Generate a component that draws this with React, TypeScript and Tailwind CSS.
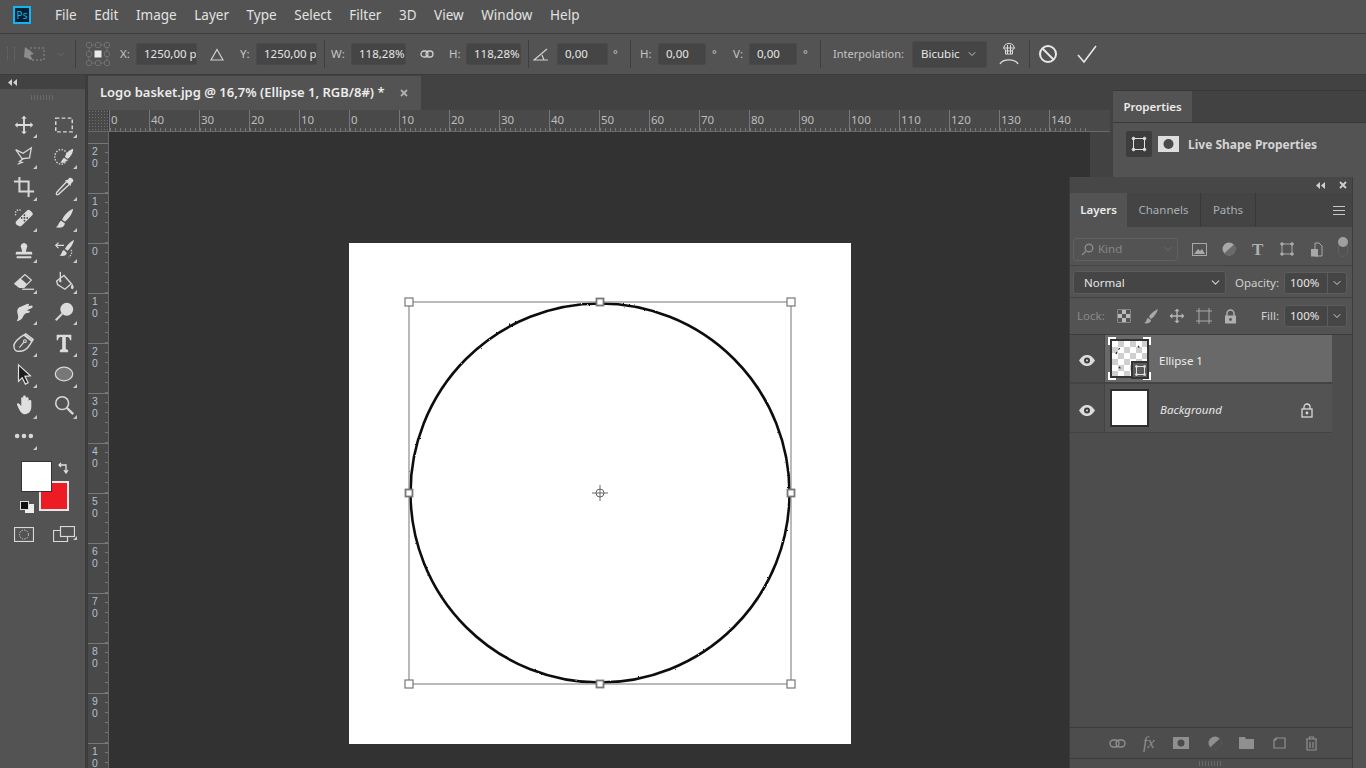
import type { ReactNode } from "react";
import { ChevronDown } from "lucide-react";

const FONT = "font-['Noto_Sans','Open_Sans',sans-serif]";

const MENU = ["File", "Edit", "Image", "Layer", "Type", "Select", "Filter", "3D", "View", "Window", "Help"];

const RULER_H = ["40", "30", "20", "10", "0", "10", "20", "30", "40", "50", "60", "70", "80", "90", "100", "110", "120", "130"];
const RULER_V = [["2", "0"], ["1", "0"], ["0"], ["1", "0"], ["2", "0"], ["3", "0"], ["4", "0"], ["5", "0"], ["6", "0"], ["7", "0"], ["8", "0"], ["9", "0"], ["1", "0"]];

function Ico({ size = 24, children }: { size?: number; children: ReactNode }) {
  return (
    <svg width={size} height={size} viewBox="0 0 24 24" fill="none" stroke="#d8d8d8" strokeWidth="1.5">
      {children}
    </svg>
  );
}

// toolbar icons, two per row, top to bottom
const TOOLS: ReactNode[] = [
  <path d="M12 2l3 3h-2v6h6V9l3 3-3 3v-2h-6v6h2l-3 3-3-3h2v-6H5v2l-3-3 3-3v2h6V5H9z" fill="#dcdcdc" stroke="none" />,
  <rect x="3" y="4.500" width="18" height="15" strokeDasharray="4 2.500" strokeWidth="1.600" />,
  <><path d="M3 5l8 4 9-6-2 11-8 1z" strokeWidth="1.400" /><path d="M11 15l-4 3 3 1-5 2" strokeWidth="1.400" /></>,
  <><ellipse cx="9" cy="13" rx="7" ry="8" strokeDasharray="1.600 1.600" /><path d="M22 4c-4 1-8 5-9 9l3 2c3-2 6-6 6-11zM12 14c-2 1-2 4-4 5 3 1 6 0 7-3z" fill="#dcdcdc" stroke="none" /></>,
  <path d="M7 1v16h16M1 6h16v17" strokeWidth="2.200" />,
  <><path d="M15 6L4 18c-1 2 0 3 2 2L18 9" strokeWidth="1.500" /><path d="M13 5l6 6 1-3 2-2c1-2-2-5-4-4l-2 2z" fill="#dcdcdc" stroke="none" /></>,
  <><path d="M4 15L15 4c2-2 3-1 5 1s2 3 1 4L10 20c-2 2-3 1-5 0s-3-3-1-5z" fill="#dcdcdc" stroke="none" /><circle cx="12.500" cy="12" r="1.100" fill="#535353" stroke="none" /><circle cx="9.500" cy="12" r="1" fill="#535353" stroke="none" /><circle cx="12.500" cy="15" r="1" fill="#535353" stroke="none" /><circle cx="15.500" cy="12" r="1" fill="#535353" stroke="none" /><circle cx="12.500" cy="9" r="1" fill="#535353" stroke="none" /><path d="M3 9a4 4 0 0 1 6-5" strokeDasharray="1.400 1.400" /></>,
  <path d="M22 2c-5 2-10 7-12 12l3 2c4-3 8-8 9-14zM9 15c-3 1-2 5-6 7 4 1 9 1 10-4z" fill="#dcdcdc" stroke="none" />,
  <path d="M9 11a3.500 3.500 0 1 1 6 0l-1 4h6c1 0 1 1 1 3H3c0-2 0-3 1-3h6zM4 20h16v2H4z" fill="#dcdcdc" stroke="none" />,
  <><path d="M23 2c-4 2-8 6-10 10l3 2c3-3 6-7 7-12zM12 13c-3 1-2 5-5 6 3 1 8 1 8-3z" fill="#dcdcdc" stroke="none" /><path d="M3 8h9M6 5L3 8l3 3" strokeWidth="1.400" /><path d="M20 13a7 7 0 0 1-3 8" strokeDasharray="1.400 1.400" /></>,
  <><path d="M2 15L13 5l7 6-8 8H7z" strokeWidth="1.400" /><path d="M2 15L8 9l7 6-3 4H7z" fill="#dcdcdc" stroke="none" /><path d="M10 21h13" strokeWidth="1.400" /></>,
  <><path d="M4 12l8-6 8 9-7 6-8-5z" strokeWidth="1.500" /><path d="M8 2v9" strokeWidth="1.500" /><circle cx="8" cy="12" r="1.300" fill="#dcdcdc" stroke="none" /><path d="M21 15c2 3 2 5 0 6-2-1-2-3 0-6z" fill="#dcdcdc" stroke="none" /></>,
  <path d="M4 22c2-3 2-5 1-8-1-4 0-7 4-8l7-3c2 0 2 2 0 3l4-1c2 0 2 2 0 3l-5 2 3 1c1 1 0 2-2 2-3 0-4 2-5 4-1 3-4 5-7 5z" fill="#dcdcdc" stroke="none" />,
  <><circle cx="15" cy="9" r="7" fill="#dcdcdc" stroke="none" /><path d="M10 14l-7 7" strokeWidth="2.200" /></>,
  <><path d="M1 15c0-4 4-7 8-10l5-3 8 6-3 5c-3 5-7 8-11 8H5c-2 0-4-2-4-6z" strokeWidth="1.600" /><path d="M12 3l9 7" strokeWidth="2.400" /><path d="M7 17l5-6" strokeWidth="1.200" /><circle cx="13" cy="10" r="1.500" strokeWidth="1.200" /></>,
  <path d="M4 3h16v6h-1.500c0-2-1-3.500-3-3.500H14v13l2.500 1V22h-9v-2.500l2.500-1v-13H8.500c-2 0-3 1.500-3 3.500H4z" fill="#dcdcdc" stroke="none" />,
  <path d="M6 2l13 12-6 .5 3.500 7-3 1.500-3.500-7-4 4z" fill="#1c1c1c" stroke="#e0e0e0" strokeWidth="1.300" />,
  <ellipse cx="12" cy="12" rx="9.500" ry="7.500" fill="#777" stroke="#d8d8d8" strokeWidth="1.400" />,
  <path d="M5 13c-2-3 1-4 3-1l1 1V5c0-2 2-2 2 0V3c0-2 3-2 3 0v2c0-2 3-2 3 0v3c0-2 3-2 3 0v6c0 5-3 8-7 8-3 0-5-2-8-9z" fill="#e0e0e0" stroke="none" />,
  <><circle cx="10" cy="10" r="7" strokeWidth="1.700" /><path d="M15 15l7 7" strokeWidth="2.500" /></>,
  <g fill="#d8d8d8" stroke="none"><circle cx="4.500" cy="12" r="2.500" /><circle cx="12" cy="12" r="2.500" /><circle cx="19.500" cy="12" r="2.500" /></g>,
];

function Triangle() {
  return <span className="absolute bottom-[2px] right-[7px] h-0 w-0 border-b-[4px] border-l-[4px] border-b-[#c8c8c8] border-l-transparent" />;
}

function Collapse() {
  return (
    <svg width="9" height="7" viewBox="0 0 9 7" fill="#d0d0d0"><path d="M4 0v7L0 3.500zM9 0v7L5 3.500z" /></svg>
  );
}

function Field({ value, w, ml = "ml-0" }: { value: string; w: string; ml?: string }) {
  return (
    <div className={`flex h-[22px] shrink-0 items-center overflow-hidden whitespace-nowrap rounded-[2px] border border-[#4a4a4a] bg-[#454545] pl-[7px] text-[11.500px] text-[#e6e6e6] ${w} ${ml}`}>
      {value}
    </div>
  );
}

function Label({ children, ml, w }: { children: ReactNode; ml: string; w: string }) {
  return <span className={`shrink-0 text-[11.500px] text-[#c4c4c4] ${ml} ${w}`}>{children}</span>;
}

function Degree({ ml }: { ml: string }) {
  return <span className={`w-[5px] shrink-0 text-[11px] text-[#c8c8c8] ${ml}`}>°</span>;
}

function Sep({ ml }: { ml: string }) {
  return <span className={`h-[28px] w-px shrink-0 bg-[#3e3e3e] ${ml}`} />;
}

function OptionsBar() {
  return (
    <div className="flex h-[41px] shrink-0 items-center border-b border-[#3c3c3c] bg-[#535353]">
      <span className="ml-[7px] h-[14px] w-[8px] shrink-0 border-x border-dotted border-[#6a6a6a]" />
      <svg width="22" height="18" viewBox="0 0 22 18" className="ml-[9px] shrink-0" fill="none">
        <path d="M1 2l9 7-4 1 3 5-9-3z" fill="#8d8d8d" />
        <rect x="6" y="3" width="14" height="12" stroke="#8d8d8d" strokeDasharray="2 2" />
      </svg>
      <ChevronDown size={11} className="ml-[9px] shrink-0 text-[#6c6c6c]" />
      <Sep ml="ml-[9px]" />
      <svg width="24" height="24" viewBox="0 0 24 24" className="ml-[10px] shrink-0" fill="none" stroke="#777" strokeWidth=".8">
        {[0.5, 9.5, 18.5].flatMap((y) => [0.5, 9.5, 18.5].map((x) => (x === 9.5 && y === 9.5 ? null : <rect key={`${x}-${y}`} x={x} y={y} width="5" height="5" rx="1.500" />)))}
        <path d="M5.500 3h4M14.500 3h4M5.500 21h4M14.500 21h4M3 5.500v4M3 14.500v4M21 5.500v4M21 14.500v4" />
        <rect x="8.500" y="8.500" width="7" height="7" fill="#ececec" stroke="none" />
      </svg>
      <Label ml="ml-[10px]" w="w-[16px]">X:</Label>
      <Field value="1250,00 px" w="w-[61px]" />
      <svg width="14" height="13" viewBox="0 0 14 13" className="ml-[13px] shrink-0" fill="none" stroke="#d0d0d0" strokeWidth="1.200"><path d="M7 1.500L13 12H1z" /></svg>
      <Label ml="ml-[16px]" w="w-[16px]">Y:</Label>
      <Field value="1250,00 px" w="w-[61px]" />
      <Sep ml="ml-[7px]" />
      <Label ml="ml-[6px]" w="w-[20px]">W:</Label>
      <Field value="118,28%" w="w-[55px]" />
      <svg width="14" height="8" viewBox="0 0 14 8" className="ml-[14px] shrink-0" fill="none" stroke="#d0d0d0" strokeWidth="1.300"><rect x="1" y="1" width="7" height="6" rx="3" /><rect x="6" y="1" width="7" height="6" rx="3" /></svg>
      <Label ml="ml-[15px]" w="w-[17px]">H:</Label>
      <Field value="118,28%" w="w-[55px]" />
      <Sep ml="ml-[7px]" />
      <svg width="16" height="13" viewBox="0 0 16 13" className="ml-[4px] shrink-0" fill="none" stroke="#d0d0d0" strokeWidth="1.200"><path d="M14 1L1 12h14M9 7l2 5" /></svg>
      <Field value="0,00" w="w-[51px]" ml="ml-[8px]" />
      <Degree ml="ml-[5px]" />
      <Sep ml="ml-[12px]" />
      <Label ml="ml-[9px]" w="w-[18px]">H:</Label>
      <Field value="0,00" w="w-[48px]" />
      <Degree ml="ml-[6px]" />
      <Label ml="ml-[16px]" w="w-[16px]">V:</Label>
      <Field value="0,00" w="w-[48px]" />
      <Degree ml="ml-[6px]" />
      <Sep ml="ml-[12px]" />
      <span className="ml-[12px] w-[79px] shrink-0 text-[11px] text-[#c4c4c4]">Interpolation:</span>
      <div className="flex h-[27px] w-[75px] shrink-0 items-center justify-between rounded-[3px] border border-[#4a4a4a] bg-[#454545] px-[8px] text-[11.500px] text-[#e6e6e6]">
        Bicubic
        <ChevronDown size={12} className="text-[#c0c0c0]" />
      </div>
      <svg width="20" height="22" viewBox="0 0 20 22" className="ml-[12px] shrink-0" fill="none" stroke="#dcdcdc" strokeWidth="1">
        <path d="M6 2c2-2 6-2 8 0l1.500 3-2 2v4h-7V7l-2-2zM4.500 5h11M8.500 2v9M11.500 2v9M6.500 8h7" />
        <path d="M1 21c3-5.500 15-5.500 18 0" strokeWidth="1.400" />
      </svg>
      <Sep ml="ml-[10px]" />
      <svg width="20" height="20" viewBox="0 0 20 20" className="ml-[8px] shrink-0" fill="none" stroke="#e8e8e8" strokeWidth="2"><circle cx="10" cy="10" r="8" /><path d="M4.500 4.500l11 11" /></svg>
      <svg width="20" height="20" viewBox="0 0 20 20" className="ml-[19px] shrink-0" fill="none" stroke="#e8e8e8" strokeWidth="1.600"><path d="M1 11l6 7L19 2" /></svg>
    </div>
  );
}

function Toolbar() {
  return (
    <div className="flex w-[88px] shrink-0 flex-col border-r-[3px] border-[#3c3c3c] bg-[#424242]">
      <div className="flex h-[14px] items-center pl-[8px]"><Collapse /></div>
      <div className="flex flex-1 flex-col bg-[#535353] pl-[4px]">
        <div className="mx-auto mt-[6px] h-[5px] w-[24px] -translate-x-[2px] bg-[repeating-linear-gradient(90deg,#6a6a6a_0_1px,transparent_1px_3px)]" />
        <div className="mt-[9px] grid w-[80px] auto-rows-[31.200px] grid-cols-2">
          {TOOLS.map((t, i) => (
            <div key={i} className="relative flex items-center justify-center">
              <Ico size={22}>{t}</Ico>
              <Triangle />
            </div>
          ))}
        </div>
        {/* colour swatches overlap, so they sit absolute inside this box */}
        <div className="relative mt-[9px] h-[60px] w-[80px]">
          <div className="absolute left-[35px] top-[20px] h-[30px] w-[30px] border-2 border-[#e8e8e8] bg-[#ed1c24]" />
          <div className="absolute left-[17px] top-0 h-[31px] w-[31px] border border-[#333] bg-white" />
          <svg width="12" height="12" viewBox="0 0 12 12" className="absolute left-[54px] top-px" fill="none" stroke="#e0e0e0" strokeWidth="1.300"><path d="M1 3h7v7M3 1L1 3l2 2M6 8l2 3 2-3" /></svg>
          <div className="absolute left-[21px] top-[43px] h-[9px] w-[9px] bg-[#eee]" />
          <div className="absolute left-[16px] top-[40px] h-[9px] w-[9px] border border-[#ddd] bg-[#111]" />
        </div>
        <div className="mt-[5px] grid w-[80px] grid-cols-2">
          <div className="flex items-center justify-center">
            <svg width="20" height="15" viewBox="0 0 20 15" fill="none" stroke="#d8d8d8"><rect x=".5" y=".5" width="19" height="14" strokeWidth="1.200" /><circle cx="10" cy="7.500" r="4.500" strokeDasharray="1.300 1.300" /></svg>
          </div>
          <div className="relative flex items-center justify-center">
            <svg width="22" height="16" viewBox="0 0 22 16" fill="none" stroke="#d8d8d8" strokeWidth="1.200"><rect x="7.500" y=".5" width="14" height="10" /><path d="M7 4.500H.5v11h14V11" /></svg>
            <Triangle />
          </div>
        </div>
      </div>
    </div>
  );
}

function RulerCell({ label, w }: { label: string; w: string }) {
  return (
    <div className={`relative shrink-0 overflow-hidden border-l border-[#777] pl-px text-[11.500px] leading-[20px] text-[#bdbdbd] ${w}`}>
      {label}
      <span className="absolute inset-x-0 bottom-0 h-[3px] bg-[repeating-linear-gradient(90deg,#777_0_1px,transparent_1px_5px)]" />
    </div>
  );
}

function Rulers() {
  return (
    <div className="flex h-[22px] shrink-0 border-b border-[#6a6a6a] bg-[#494949]">
      <div className="w-[21px] shrink-0 border-r border-[#3c3c3c] bg-[radial-gradient(#707070_0.5px,transparent_0.5px)] bg-[length:3px_3px]" />
      <RulerCell label="0" w="w-[40px]" />
      {RULER_H.map((n, i) => <RulerCell key={i} label={n} w="w-[50px]" />)}
      <RulerCell label="140" w="w-[38px]" />
    </div>
  );
}

function VRuler() {
  return (
    <div className="w-[21px] shrink-0 overflow-hidden border-r border-[#6a6a6a] bg-[#494949] pt-[11px]">
      {RULER_V.map((d, i) => (
        <div key={i} className="relative h-[50px] border-t border-[#777] pt-[2px] text-center font-['Liberation_Sans'] text-[10.400px] leading-[12px] text-[#b4c0cc]">
          {d.map((c, j) => <div key={j} className="-translate-x-[3px]">{c}</div>)}
          <span className="absolute bottom-0 right-0 top-0 w-[3px] bg-[repeating-linear-gradient(0deg,#777_0_1px,transparent_1px_10px)]" />
        </div>
      ))}
    </div>
  );
}

function Handle({ x, y, small }: { x: number; y: number; small?: boolean }) {
  const s = small ? 7 : 8;
  return <rect x={x - s / 2} y={y - s / 2} width={s} height={s} fill="#fff" stroke="#777" strokeWidth={small ? 1.800 : 1.200} />;
}

function Document() {
  return (
    <div className="ml-[240px] mt-[111px] h-[501px] w-[502px] shrink-0 bg-white">
      <svg width="502" height="501" viewBox="0 0 502 501">
        <defs>
          <filter id="rough" x="-5%" y="-5%" width="110%" height="110%">
            <feTurbulence type="fractalNoise" baseFrequency="0.35" numOctaves="2" seed="3" />
            <feDisplacementMap in="SourceGraphic" scale="1.800" />
          </filter>
        </defs>
        <circle cx="251" cy="250" r="189.500" fill="none" stroke="#111" strokeWidth="2.600" filter="url(#rough)" />
        <rect x="60" y="59" width="382" height="382" fill="none" stroke="#8c8c8c" strokeWidth="1.200" />
        <Handle x={251} y={59} small /><Handle x={251} y={441} small /><Handle x={60} y={250} small /><Handle x={442} y={250} small />
        <Handle x={60} y={59} /><Handle x={442} y={59} /><Handle x={60} y={441} /><Handle x={442} y={441} />
        <g fill="none" stroke="#666" strokeWidth="1"><circle cx="251" cy="250" r="4" /><path d="M251 242v16M243 250h16" /></g>
      </svg>
    </div>
  );
}

function FilterIcons() {
  return (
    <div className="ml-[14px] flex items-center">
      <svg width="15" height="13" viewBox="0 0 15 13" fill="none" stroke="#a8a8a8"><rect x=".5" y=".5" width="14" height="12" /><path d="M2 11l4-5 2 2 2-2 3 5z" fill="#a8a8a8" stroke="none" /></svg>
      <svg width="14" height="14" viewBox="0 0 14 14" className="ml-[15px]"><circle cx="7" cy="7" r="6.500" fill="#a8a8a8" /><path d="M12 2.500L2 11.500A6.500 6.500 0 0 0 12 2.500z" fill="#6a6a6a" /></svg>
      <span className="ml-[16px] font-['Liberation_Serif'] text-[17px] font-bold leading-none text-[#b0b0b0]">T</span>
      <svg width="14" height="14" viewBox="0 0 14 14" className="ml-[17px]" fill="none" stroke="#a8a8a8"><rect x="2" y="2" width="10" height="10" /><g fill="#a8a8a8"><circle cx="2" cy="2" r="1.300" /><circle cx="12" cy="2" r="1.300" /><circle cx="2" cy="12" r="1.300" /><circle cx="12" cy="12" r="1.300" /></g></svg>
      <svg width="13" height="15" viewBox="0 0 13 15" className="ml-[16px]" fill="none" stroke="#a8a8a8"><path d="M5 1h4l3 3v10H5z" /><rect x="1" y="7" width="7" height="7.500" fill="#a8a8a8" stroke="none" /></svg>
    </div>
  );
}

function LockIcons() {
  return (
    <div className="ml-[12px] flex items-center">
      <svg width="14" height="14" viewBox="0 0 14 14"><rect x=".5" y=".5" width="13" height="13" fill="#bbb" /><g fill="#555"><rect x="1" y="1" width="4" height="4" /><rect x="9" y="1" width="4" height="4" /><rect x="5" y="5" width="4" height="4" /><rect x="1" y="9" width="4" height="4" /><rect x="9" y="9" width="4" height="4" /></g></svg>
      <svg width="16" height="16" viewBox="0 0 16 16" className="ml-[12px]" fill="#a8a8a8"><path d="M15 1C11 3 7 6 6 9l2 2c3-2 6-6 7-10zM5 10c-2 1-1 4-4 5 3 1 7 0 7-3z" /></svg>
      <svg width="16" height="16" viewBox="0 0 24 24" className="ml-[10px]" fill="#b8b8b8"><path d="M12 1l4 4h-3v6h6V8l4 4-4 4v-3h-6v6h3l-4 4-4-4h3v-6H5v3l-4-4 4-4v3h6V5H8z" /></svg>
      <svg width="16" height="16" viewBox="0 0 16 16" className="ml-[11px]" fill="none" stroke="#a8a8a8"><rect x="3" y="3" width="10" height="10" /><path d="M0 3h3M13 3h3M3 0v3M13 0v3M0 13h3M13 13h3M3 13v3M13 13v3" /></svg>
      <svg width="13" height="15" viewBox="0 0 13 15" className="ml-[12px]"><path d="M3 7V4.500a3.500 3.500 0 0 1 7 0V7" fill="none" stroke="#b0b0b0" strokeWidth="1.500" /><rect x="1" y="6.500" width="11" height="8" fill="#b0b0b0" /><circle cx="6.500" cy="10.500" r="1.400" fill="#555" /></svg>
    </div>
  );
}

function Eye() {
  return (
    <svg width="16" height="11" viewBox="0 0 16 11" className="mx-auto mt-[4px]">
      <path d="M0 5.500C3 1 5.500 0 8 0s5 1 8 5.500C13 10 10.500 11 8 11S3 10 0 5.500z" fill="#dcdcdc" />
      <circle cx="8" cy="5.500" r="3" fill="#3d3d3d" />
      <circle cx="8" cy="5.500" r="1" fill="#dcdcdc" />
    </svg>
  );
}

function SmallBox() {
  return (
    <div className="flex h-[22px] w-[63px] items-center rounded-[3px] border border-[#5c5c5c] bg-[#454545] text-[#e6e6e6]">
      <span className="h-full w-[43px] border-r border-[#5c5c5c] pl-[5px] leading-[20px]">100%</span>
      <ChevronDown size={12} className="ml-[3px] text-[#d0d0d0]" />
    </div>
  );
}

function LayerThumb() {
  const bracket = "absolute h-[8px] w-[8px] border-white";
  return (
    <div className="relative ml-[3px] h-[43px] w-[43px]">
      <span className={`${bracket} left-0 top-0 border-l-2 border-t-2`} />
      <span className={`${bracket} right-0 top-0 border-r-2 border-t-2`} />
      <span className={`${bracket} bottom-0 left-0 border-b-2 border-l-2`} />
      <span className={`${bracket} bottom-0 right-0 border-b-2 border-r-2`} />
      <div className="absolute inset-x-[2px] inset-y-[2px] border-2 border-[#333] bg-[repeating-conic-gradient(#cfcfcf_0_25%,#fff_0_50%)] bg-[length:12px_12px]">
        <svg width="35" height="35" viewBox="0 0 35 35" fill="none" stroke="#222" strokeWidth="1.200" strokeDasharray="2 3"><path d="M4 13c1-3 3-5 5-7M26 5c1 1 2 3 3 4M7 26c1 1 2 2 3 3" /></svg>
      </div>
      <div className="absolute bottom-[1px] right-[2px] flex h-[18px] w-[18px] items-center justify-center border-2 border-[#333] bg-[#5a5a5a]">
        <svg width="13" height="13" viewBox="0 0 13 13" fill="none" stroke="#e0e0e0"><rect x="2.500" y="2.500" width="8" height="8" /><g fill="#e0e0e0"><circle cx="2.500" cy="2.500" r="1" /><circle cx="10.500" cy="2.500" r="1" /><circle cx="2.500" cy="10.500" r="1" /><circle cx="10.500" cy="10.500" r="1" /></g></svg>
      </div>
    </div>
  );
}

function LayersPanel() {
  return (
    <div className="absolute bottom-0 left-[1069px] top-[177px] flex w-[284px] flex-col border-x border-[#3c3c3c] bg-[#535353]">
      <div className="flex h-[16px] shrink-0 items-center justify-end gap-[14px] bg-[#474747] pr-[5px]">
        <Collapse />
        <svg width="8" height="8" viewBox="0 0 8 8" stroke="#d0d0d0" strokeWidth="1.800"><path d="M1 1l6 6M7 1L1 7" /></svg>
      </div>
      <div className="flex h-[34px] shrink-0 items-stretch bg-[#444] text-[11.500px]">
        <div className="flex w-[57px] items-center justify-center bg-[#535353] font-semibold text-[#ececec]">Layers</div>
        <div className="flex w-[74px] items-center justify-center border-r border-[#383838] text-[#a8b0b6]">Channels</div>
        <div className="flex w-[55px] items-center justify-center border-r border-[#383838] text-[#a8b0b6]">Paths</div>
        <div className="ml-auto flex w-[19px] items-center">
          <span className="h-[9px] w-[12px] border-y border-[#c8c8c8] bg-[linear-gradient(#c8c8c8,#c8c8c8)] bg-[length:100%_1px] bg-center bg-no-repeat" />
        </div>
      </div>
      <div className="flex h-[39px] shrink-0 items-center border-b border-[#444] pl-[3px] pt-[6px]">
        <div className="flex h-[23px] w-[105px] items-center rounded-[3px] border border-[#606060] pl-[7px] text-[11.500px] text-[#868686]">
          <svg width="13" height="13" viewBox="0 0 13 13" fill="none" stroke="#8a8a8a" strokeWidth="1.400"><circle cx="8" cy="5" r="3.800" /><path d="M5 8l-4 4" /></svg>
          <span className="ml-[4px]">Kind</span>
          <ChevronDown size={12} className="ml-auto mr-[3px] text-[#707070]" />
        </div>
        <FilterIcons />
        <div className="relative ml-[15px] h-[15px] w-[10px] rounded-full border border-[#606060]">
          <span className="absolute -left-[1px] -top-[6px] h-[10px] w-[10px] rounded-full bg-[#a0a0a0]" />
        </div>
      </div>
      <div className="flex h-[32px] shrink-0 items-center border-b border-[#444] pl-[3px] pr-[5px] pt-[2px] text-[11.500px]">
        <div className="flex h-[23px] w-[153px] items-center justify-between rounded-[3px] border border-[#5c5c5c] bg-[#454545] pl-[10px] pr-[3px] text-[#e6e6e6]">
          Normal
          <ChevronDown size={13} className="text-[#d0d0d0]" />
        </div>
        <span className="ml-auto mr-[5px] text-[#d0d0d0]">Opacity:</span>
        <SmallBox />
      </div>
      <div className="flex h-[37px] shrink-0 items-center border-b border-[#3c3c3c] pl-[7px] pr-[5px] text-[11.500px]">
        <span className="text-[#8a8a8a]">Lock:</span>
        <LockIcons />
        <span className="ml-auto mr-[5px] text-[#d0d0d0]">Fill:</span>
        <SmallBox />
      </div>

      <div className="flex min-h-0 flex-1 flex-col bg-[#4d4d4d]">
        <div className="flex h-[49px] w-[262px] shrink-0 border-b-2 border-[#434343]">
          <div className="flex w-[35px] shrink-0 items-center border-r border-[#434343]"><Eye /></div>
          <div className="flex flex-1 items-center bg-[#696969]">
            <LayerThumb />
            <span className="ml-[8px] mt-[4px] text-[11.500px] text-[#ececec]">Ellipse 1</span>
          </div>
        </div>
        <div className="flex h-[49px] w-[262px] shrink-0 border-b border-[#434343]">
          <div className="flex w-[35px] shrink-0 items-center border-r border-[#434343]"><Eye /></div>
          <div className="flex flex-1 items-center bg-[#535353]">
            <div className="ml-[5px] h-[38px] w-[39px] border-2 border-[#2f2f2f] bg-white" />
            <span className="ml-[11px] mt-[4px] text-[11.500px] italic text-[#e4e4e4]">Background</span>
            <svg width="12" height="15" viewBox="0 0 12 15" className="ml-[79px] mt-[4px]" fill="none" stroke="#d8d8d8" strokeWidth="1.300"><path d="M3 6V4a3 3 0 0 1 6 0v2" /><rect x="1" y="6" width="10" height="8" /><circle cx="6" cy="10" r=".8" fill="#d8d8d8" /></svg>
          </div>
        </div>
        <div className="mt-auto flex h-[31px] shrink-0 items-center border-t border-[#3c3c3c] pl-[39px]">
          <svg width="17" height="9" viewBox="0 0 17 9" fill="none" stroke="#8f8f8f" strokeWidth="1.400"><rect x="1" y="1" width="9" height="7" rx="3.500" /><rect x="7" y="1" width="9" height="7" rx="3.500" /></svg>
          <span className="ml-[17px] w-[14px] font-['Liberation_Serif'] text-[16px] italic leading-none text-[#8f8f8f]">fx</span>
          <svg width="16" height="12" viewBox="0 0 16 12" className="ml-[16px]"><rect width="16" height="12" fill="#8f8f8f" /><ellipse cx="8" cy="6" rx="3.500" ry="3.500" fill="#4b4b4b" /></svg>
          <svg width="14" height="14" viewBox="0 0 14 14" className="ml-[19px]"><circle cx="7" cy="7" r="6.500" fill="#8f8f8f" /><path d="M12 2.500L2 11.500A6.500 6.500 0 0 0 12 2.500z" fill="#4f4f4f" /></svg>
          <svg width="15" height="12" viewBox="0 0 15 12" className="ml-[17px]" fill="#8f8f8f"><path d="M0 0h6l1 2h8v10H0z" /></svg>
          <svg width="13" height="13" viewBox="0 0 13 13" className="ml-[19px]" fill="none" stroke="#8f8f8f" strokeWidth="1.200"><path d="M1 3v8h11V1H3zM3 1v2H1" /></svg>
          <svg width="13" height="15" viewBox="0 0 13 15" className="ml-[19px]" fill="none" stroke="#8f8f8f" strokeWidth="1.200"><path d="M1 3h11M4.500 3V1h4v2M2 3v11h9V3M5 6v6M8 6v6" /></svg>
        </div>
        <div className="flex h-[10px] shrink-0 items-center justify-center border-t border-[#3c3c3c] bg-[#4e4e4e]">
          <span className="h-[5px] w-[24px] bg-[repeating-linear-gradient(90deg,#6a6a6a_0_1px,transparent_1px_3px)]" />
        </div>
      </div>
    </div>
  );
}

export default function App() {
  return (
    <div className={`relative flex h-screen w-[1366px] flex-col overflow-hidden bg-[#535353] ${FONT}`}>
      <div className="flex h-[34px] shrink-0 items-center border-b border-[#3c3c3c] bg-[#535353] pb-[3px] pl-[13px]">
        <div className="flex h-[18px] w-[18px] items-center justify-center border-2 border-[#11b5f5] bg-[#00202e] text-[10px] leading-none text-[#11b5f5]">Ps</div>
        <div className="ml-[24px] flex gap-[17.600px] pt-px text-[13.500px] text-[#e2e2e2]">
          {MENU.map((m) => <span key={m}>{m}</span>)}
        </div>
      </div>
      <OptionsBar />
      <div className="flex min-h-0 flex-1">
        <Toolbar />
        <div className="flex w-[1022px] shrink-0 flex-col bg-[#424242]">
          <div className="flex h-[35px] shrink-0 items-stretch pt-px">
            <div className="flex w-[333px] items-center bg-[#535353] pl-[12px] text-[13px] font-semibold text-[#ececec]">
              Logo basket.jpg @ 16,7% (Ellipse 1, RGB/8#) *
              <svg width="8" height="8" viewBox="0 0 8 8" className="ml-[15px]" stroke="#b0b0b0" strokeWidth="1.800"><path d="M1 1l6 6M7 1L1 7" /></svg>
            </div>
          </div>
          <Rulers />
          <div className="flex min-h-0 flex-1">
            <VRuler />
            <div className="flex-1 overflow-hidden bg-[#323232]">
              <Document />
            </div>
            <div className="w-[20px] shrink-0 bg-[#424242]" />
          </div>
        </div>
        <div className="flex flex-1 flex-col bg-[#424242] pl-[3px] pt-[15px]">
          <div className="flex h-[33px] shrink-0 border-y border-[#383838] bg-[#424242]">
            <div className="flex w-[79px] items-center justify-center bg-[#535353] text-[11.500px] font-semibold text-[#ececec]">Properties</div>
          </div>
          <div className="flex flex-1 items-start bg-[#535353] pl-[13px] pt-[8px]">
            <div className="flex h-[26px] w-[26px] items-center justify-center rounded-[2px] bg-[#3d3d3d]">
              <svg width="16" height="16" viewBox="0 0 16 16" fill="none" stroke="#e0e0e0"><rect x="2.500" y="2.500" width="11" height="11" /><g fill="#e0e0e0"><circle cx="2.500" cy="2.500" r="1.300" /><circle cx="13.500" cy="2.500" r="1.300" /><circle cx="2.500" cy="13.500" r="1.300" /><circle cx="13.500" cy="13.500" r="1.300" /></g></svg>
            </div>
            <svg width="21" height="16" viewBox="0 0 21 16" className="ml-[6px] mt-[5px]"><rect width="21" height="16" fill="#dedede" /><circle cx="10.500" cy="8" r="5" fill="#4a4a4a" /></svg>
            <span className="ml-[9px] mt-[5px] text-[12px] font-bold text-[#d4d4d4]">Live Shape Properties</span>
          </div>
        </div>
      </div>
      <LayersPanel />
    </div>
  );
}
